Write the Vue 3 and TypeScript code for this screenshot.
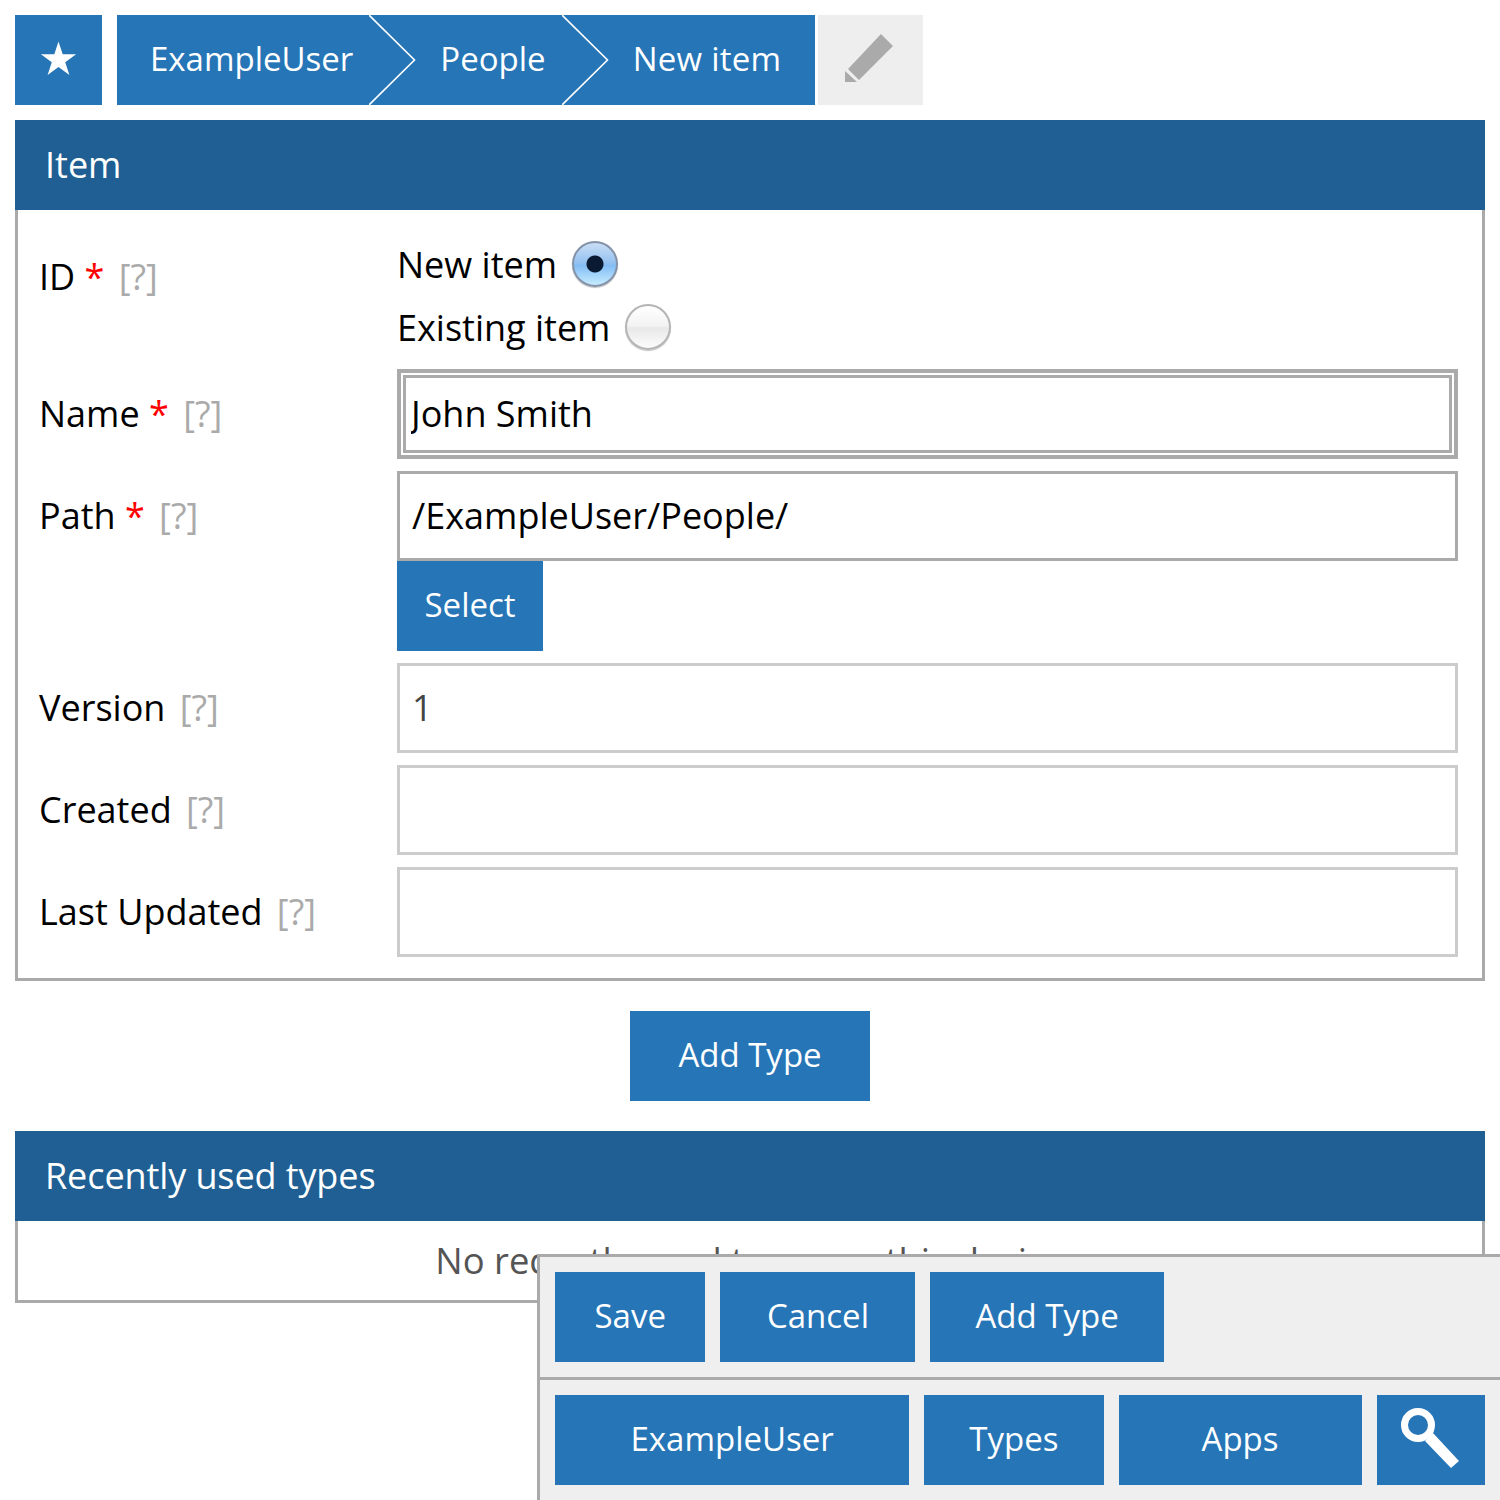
<script setup lang="ts">
type Field = {
  label: string;
  required: boolean;
  value: string;
  kind: 'focus' | 'strong' | 'soft';
};

const crumbs = ['ExampleUser', 'People', 'New item'];

const fields: Field[] = [
  { label: 'Name', required: true, value: 'John Smith', kind: 'focus' },
  { label: 'Path', required: true, value: '/ExampleUser/People/', kind: 'strong' },
  { label: 'Version', required: false, value: '1', kind: 'soft' },
  { label: 'Created', required: false, value: '', kind: 'soft' },
  { label: 'Last Updated', required: false, value: '', kind: 'soft' },
];
</script>

<template>
  <div class="page">
    <nav class="top">
      <a class="fav">
        <svg width="87" height="90" viewBox="0 0 87 90"><path d="M43.500 26.500L47.700 39.300H61.100L50.250 47.200L54.400 60L43.500 52.100L32.600 60L36.750 47.200L25.900 39.300H39.300z" fill="#fff" /></svg>
      </a>
      <div class="crumbs">
        <a v-for="(c, i) in crumbs" :key="c" class="crumb">
          {{ c }}
          <svg v-if="i < crumbs.length - 1" class="chev" width="47" height="90" viewBox="0 0 47 90">
            <path d="M0 0L45.500 45L0 90" fill="none" stroke="#fff" stroke-width="1.600" />
          </svg>
        </a>
      </div>
      <a class="edit">
        <svg width="105" height="90" viewBox="0 0 105 90"><path d="M63 19L75 31L41 65L30 54zM27 56L39 67H27z" fill="#aaa" /></svg>
      </a>
    </nav>

    <section class="panel">
      <h2>Item</h2>
      <div class="form">
        <div class="row">
          <label class="lbl">ID <i>*</i> <span class="help">[?]</span></label>
          <div class="radios">
            <label class="radio">New item <input type="radio" name="id" checked /></label>
            <label class="radio">Existing item <input type="radio" name="id" /></label>
          </div>
        </div>
        <template v-for="f in fields" :key="f.label">
          <div class="row">
            <label class="lbl">{{ f.label }} <i v-if="f.required">*</i> <span class="help">[?]</span></label>
            <div>
              <input class="txt" :class="f.kind" type="text" :value="f.value" />
              <button v-if="f.label === 'Path'" class="btn select">Select</button>
            </div>
          </div>
        </template>
      </div>
    </section>

    <div class="add"><button class="btn add-type">Add Type</button></div>

    <section class="panel">
      <h2 class="recent">Recently used types</h2>
      <p class="none">No recently used types on this device</p>
    </section>

    <footer class="bar">
      <div class="bar-row">
        <button class="btn save">Save</button>
        <button class="btn cancel">Cancel</button>
        <button class="btn">Add Type</button>
      </div>
      <div class="bar-row second">
        <button class="btn home">ExampleUser</button>
        <button class="btn">Types</button>
        <button class="btn apps">Apps</button>
        <button class="btn search">
          <svg width="108" height="90" viewBox="0 0 108 90">
            <circle cx="41" cy="30" r="13.500" fill="none" stroke="#fff" stroke-width="7" />
            <path d="M56 38L82 66L74 73L48 46z" fill="#fff" />
          </svg>
        </button>
      </div>
    </footer>
  </div>
</template>

<style>
body {
  background: #fff;
}
</style>

<style scoped>
.page {
  padding: 15px;
  font-family: "Open Sans", "Noto Sans", sans-serif;
  font-size: 36px;
  color: #000;
}

.top {
  display: flex;
  height: 90px;
  margin-bottom: 15px;
}

.fav {
  width: 87px;
  margin-right: 15px;
  background: #2575b7;
}

.crumbs {
  display: flex;
  background: #2575b7;
  color: #fff;
  font-size: 33px;
  line-height: 88px;
}

.crumb {
  position: relative;
  padding: 0 62px 0 25px;
}

.crumb:first-child {
  padding-left: 33px;
}

.crumb:last-child {
  padding-right: 34px;
  letter-spacing: 0.25px;
}

.chev {
  position: absolute;
  right: -1px;
  top: 0;
}

.edit {
  width: 105px;
  margin-left: 3px;
  background: #eee;
}

.panel {
  border: 3px solid #aaa;
  border-top: 0;
}

.panel h2 {
  margin: 0 -3px;
  height: 90px;
  padding-left: 30px;
  background: #1f5f93;
  color: #fff;
  font-size: 36px;
  font-weight: 400;
  line-height: 90px;
}

.panel h2.recent {
  letter-spacing: -0.1px;
}

.form {
  padding: 22px 24px 21px 21px;
  display: flex;
  flex-direction: column;
  gap: 12px;
}

.row {
  display: grid;
  grid-template-columns: 358px 1fr;
}

.lbl {
  line-height: 90px;
}

.lbl i {
  color: #f00;
  font-style: normal;
}

.help {
  color: #aaa;
  margin-left: 5px;
}

.radios {
  display: flex;
  flex-direction: column;
  margin: 1px 0 -2px;
}

.radio {
  display: flex;
  align-items: center;
  gap: 14.500px;
  height: 63px;
}

.radio input {
  appearance: none;
  width: 46px;
  height: 46px;
  margin: 0 0 2px;
  border-radius: 50%;
  border: 2px solid #b4b4b4;
  background: linear-gradient(#fff, #f3f3f3 48%, #e8e8e8 52%, #fcfcfc);
  box-shadow: 0 1px 1px rgba(0, 0, 0, 0.25);
}

.radio input:checked {
  border-color: #8492a8;
  background: radial-gradient(circle at 50% 50%, #0a1a33 0 8px, transparent 9px), linear-gradient(#c9def5, #93c1f0 48%, #83bdf5 53%, #c6ecff);
}

.txt {
  display: block;
  box-sizing: border-box;
  width: 100%;
  height: 90px;
  padding: 0 12px 2px;
  border: 3px solid #ccc;
  font: inherit;
  color: #000;
  outline: none;
  border-radius: 0;
}

.txt.strong {
  border-color: #aaa;
}

.txt.focus {
  border: 4px solid #aaa;
  padding-left: 10px;
  box-shadow: inset 0 0 0 2px #fff, inset 0 0 0 5px #aaa;
}

.txt.soft {
  color: #444;
}

.btn {
  height: 90px;
  padding: 0 45px 2px;
  border: 0;
  background: #2575b7;
  color: #fff;
  font: inherit;
  font-size: 33px;
  line-height: 88px;
}

.select {
  display: block;
  padding: 0 27.500px 2px;
}

.add {
  display: flex;
  justify-content: center;
  margin: 30px 0;
}

.add-type {
  padding: 0 48px 2px;
}

.none {
  margin: 0;
  height: 79px;
  font-size: 36.400px;
  line-height: 79px;
  text-align: center;
  color: #555;
}

.bar {
  position: fixed;
  right: 0;
  bottom: 0;
  width: 963px;
  box-sizing: border-box;
  background: #efefef;
  border-top: 3px solid #aaa;
  border-left: 3px solid #aaa;
}

.bar-row {
  display: flex;
  gap: 15px;
  padding: 15px;
}

.bar-row.second {
  border-top: 3px solid #aaa;
}

.save {
  padding: 0 39.500px 2px;
}

.cancel {
  padding: 0 46.500px 2px;
}

.home {
  padding: 0 75.500px 2px;
}

.apps {
  padding: 0 83px 2px;
}

.search {
  width: 108px;
  padding: 0;
}
</style>
